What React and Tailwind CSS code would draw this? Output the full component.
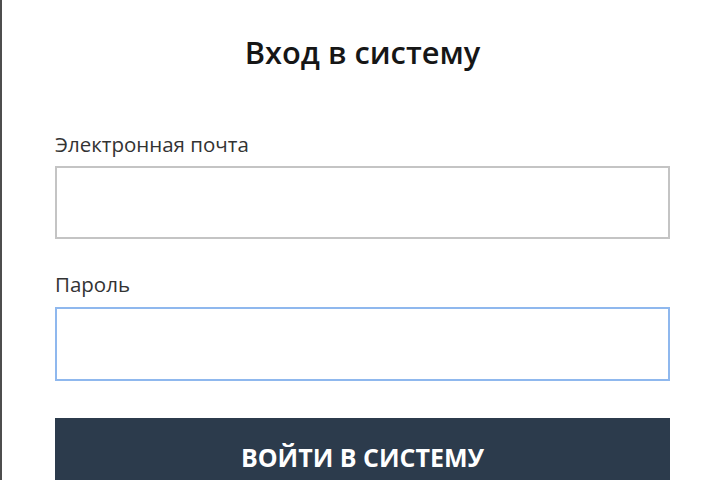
import React from 'react';

const App = () => {
  return (
    <div className="w-[720px] h-[480px] overflow-hidden bg-white border-l-2 border-[#4d4d4d] font-['Open_Sans',sans-serif]">
      <div className="pl-[53px] pr-[50px]">
        <h1 className="pt-[33px] text-center text-[30.8px] leading-[38px] font-semibold text-[#161616]">
          Вход в систему
        </h1>

        <form className="mt-[61px] flex flex-col">
          <label className="text-[20.5px] leading-[24px] text-[#333]">Электронная почта</label>
          <input
            type="email"
            className="mt-[10px] h-[73px] w-full border-2 border-[#c4c4c4] bg-white outline-none"
          />

          <label className="mt-[33px] text-[20.5px] leading-[24px] text-[#333]">Пароль</label>
          <input
            type="password"
            className="mt-[11px] h-[74px] w-full border-2 border-[#8fb8ee] bg-white outline-none"
          />

          <button
            type="button"
            className="mt-[37px] flex h-[100px] w-full items-start justify-center bg-[#2c3b4c] pt-[27px] text-[25px] leading-[24px] font-bold text-white"
          >
            ВОЙТИ В СИСТЕМУ
          </button>
        </form>
      </div>
    </div>
  );
};

export default App;
